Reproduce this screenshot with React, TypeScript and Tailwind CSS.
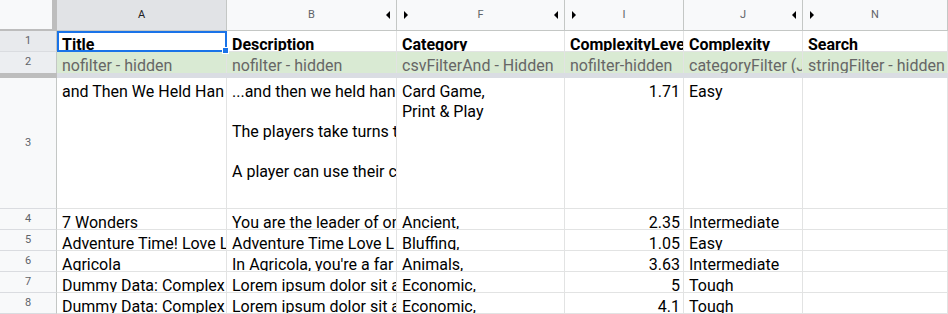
import React from "react";

const LeftTri = () => (
  <div className="h-0 w-0 border-y-[4px] border-y-transparent border-r-[4px] border-r-black" />
);
const RightTri = () => (
  <div className="h-0 w-0 border-y-[4px] border-y-transparent border-l-[4px] border-l-black" />
);

function ColHead({
  letter,
  left,
  right,
  active,
}: {
  letter: string;
  left?: boolean;
  right?: boolean;
  active?: boolean;
}) {
  return (
    <div
      className={
        "flex items-center border-r border-b border-[#c4c7c5] text-[11px] " +
        (active ? "bg-[#e1e3e6] text-[#202124]" : "bg-[#f8f9fa] text-[#5f6368]")
      }
    >
      <div className="flex w-[14px] justify-start pl-[7px]">{left && <RightTri />}</div>
      <div className="flex-1 text-center">{letter}</div>
      <div className="flex w-[14px] justify-end pr-[6px]">{right && <LeftTri />}</div>
    </div>
  );
}

function RowHead({ n, bg = "bg-[#f8f9fa]" }: { n: number; bg?: string }) {
  return (
    <div
      className={
        "flex items-center justify-center border-r border-b border-r-[#c4c7c5] border-b-[#dadce0] text-[11px] text-[#5f6368] " +
        bg
      }
    >
      {n}
    </div>
  );
}

function Cell({
  children,
  num,
  className = "",
  textClass = "-mb-[2px]",
}: {
  children?: React.ReactNode;
  num?: boolean;
  className?: string;
  textClass?: string;
}) {
  return (
    <div
      className={
        "flex items-end overflow-hidden whitespace-nowrap border-r border-b border-[#e2e3e3] " +
        (num ? "justify-end pr-[3px] pl-[5px] " : "pl-[5px] pr-[3px] ") +
        className
      }
    >
      <span className={"text-[16px] leading-[16px] " + textClass}>{children}</span>
    </div>
  );
}

const rows: [string, string, string, string, string][] = [
  ["7 Wonders", "You are the leader of on", "Ancient,", "2.35", "Intermediate"],
  ["Adventure Time! Love L", "Adventure Time Love L", "Bluffing,", "1.05", "Easy"],
  ["Agricola", "In Agricola, you're a far", "Animals,", "3.63", "Intermediate"],
  ["Dummy Data: Complex", "Lorem ipsum dolor sit a", "Economic,", "5", "Tough"],
  ["Dummy Data: Complex", "Lorem ipsum dolor sit a", "Economic,", "4.1", "Tough"],
];

const H = "-mb-[2px] font-bold";
const G = "-mb-px text-[#666666]";

export default function App() {
  return (
    <div className="grid h-[314px] w-[948px] grid-cols-[57px_170px_170px_168px_119px_119px_1fr] grid-rows-[31px_21px_21px_5px_131px_21px_21px_21px_21px_21px] overflow-hidden bg-white font-[Roboto,Arial,sans-serif] text-black">
      {/* column header row */}
      <div className="border-r-[5px] border-b-2 border-[#bdbdbd] bg-[#f8f9fa]" />
      <ColHead letter="A" active />
      <ColHead letter="B" right />
      <ColHead letter="F" left right />
      <ColHead letter="I" left />
      <ColHead letter="J" right />
      <ColHead letter="N" left />

      {/* row 1 */}
      <RowHead n={1} bg="bg-[#e8eaed]" />
      <div className="relative border-r border-b border-[#e2e3e3]">
        <div className="flex h-full items-end overflow-hidden whitespace-nowrap pl-[5px] pr-[3px]">
          <span className="-mb-[2px] text-[16px] font-bold leading-[16px]">Title</span>
        </div>
        <div className="absolute top-0 left-0 -right-px -bottom-px border-2 border-[#1a73e8]" />
        <div className="absolute -right-[3px] -bottom-[3px] h-[7px] w-[7px] border border-white bg-[#1a73e8]" />
      </div>
      <Cell textClass={H}>Description</Cell>
      <Cell textClass={H}>Category</Cell>
      <Cell textClass={H}>ComplexityLeve</Cell>
      <Cell textClass={H}>Complexity</Cell>
      <Cell textClass={H}>Search</Cell>

      {/* row 2 */}
      <div className="flex items-center justify-center border-r border-r-[#c4c7c5] bg-[#eceef1] text-[11px] text-[#5f6368]">
        2
      </div>
      <Cell className="border-b-0 bg-[#d9ead3]" textClass={G}>nofilter - hidden</Cell>
      <Cell className="border-b-0 bg-[#d9ead3]" textClass={G}>nofilter - hidden</Cell>
      <Cell className="border-b-0 bg-[#d9ead3]" textClass={G}>csvFilterAnd - Hidden</Cell>
      <Cell className="border-b-0 bg-[#d9ead3]" textClass={G}>nofilter-hidden</Cell>
      <Cell className="border-b-0 bg-[#d9ead3]" textClass={G}>categoryFilter (J</Cell>
      <Cell className="border-b-0 bg-[#d9ead3]" textClass={G}>stringFilter - hidden</Cell>

      {/* freeze bar */}
      <div className="bg-[#bdbdbd]" />
      <div className="col-span-6 bg-[#dadde3]" />

      {/* row 3 */}
      <RowHead n={3} />
      <div className="overflow-hidden whitespace-nowrap border-r border-b border-[#e2e3e3] pt-[4px] pl-[5px] text-[16px] leading-[20px]">
        and Then We Held Han
      </div>
      <div className="overflow-hidden whitespace-nowrap border-r border-b border-[#e2e3e3] pt-[4px] pl-[5px] text-[16px] leading-[20px]">
        <div>...and then we held han</div>
        <div className="h-[20px]" />
        <div>The players take turns t</div>
        <div className="h-[20px]" />
        <div>A player can use their c</div>
      </div>
      <div className="overflow-hidden border-r border-b border-[#e2e3e3] pt-[4px] pl-[5px] text-[16px] leading-[20px]">
        <div>Card Game,</div>
        <div>Print &amp; Play</div>
      </div>
      <div className="flex justify-end overflow-hidden border-r border-b border-[#e2e3e3] pt-[4px] pr-[3px] text-[16px] leading-[20px]">
        1.71
      </div>
      <div className="overflow-hidden border-r border-b border-[#e2e3e3] pt-[4px] pl-[5px] text-[16px] leading-[20px]">
        Easy
      </div>
      <div className="border-r border-b border-[#e2e3e3]" />

      {/* rows 4-8 */}
      {rows.map((r, i) => (
        <React.Fragment key={i}>
          <RowHead n={i + 4} />
          <Cell>{r[0]}</Cell>
          <Cell>{r[1]}</Cell>
          <Cell>{r[2]}</Cell>
          <Cell num>{r[3]}</Cell>
          <Cell>{r[4]}</Cell>
          <Cell />
        </React.Fragment>
      ))}
    </div>
  );
}
